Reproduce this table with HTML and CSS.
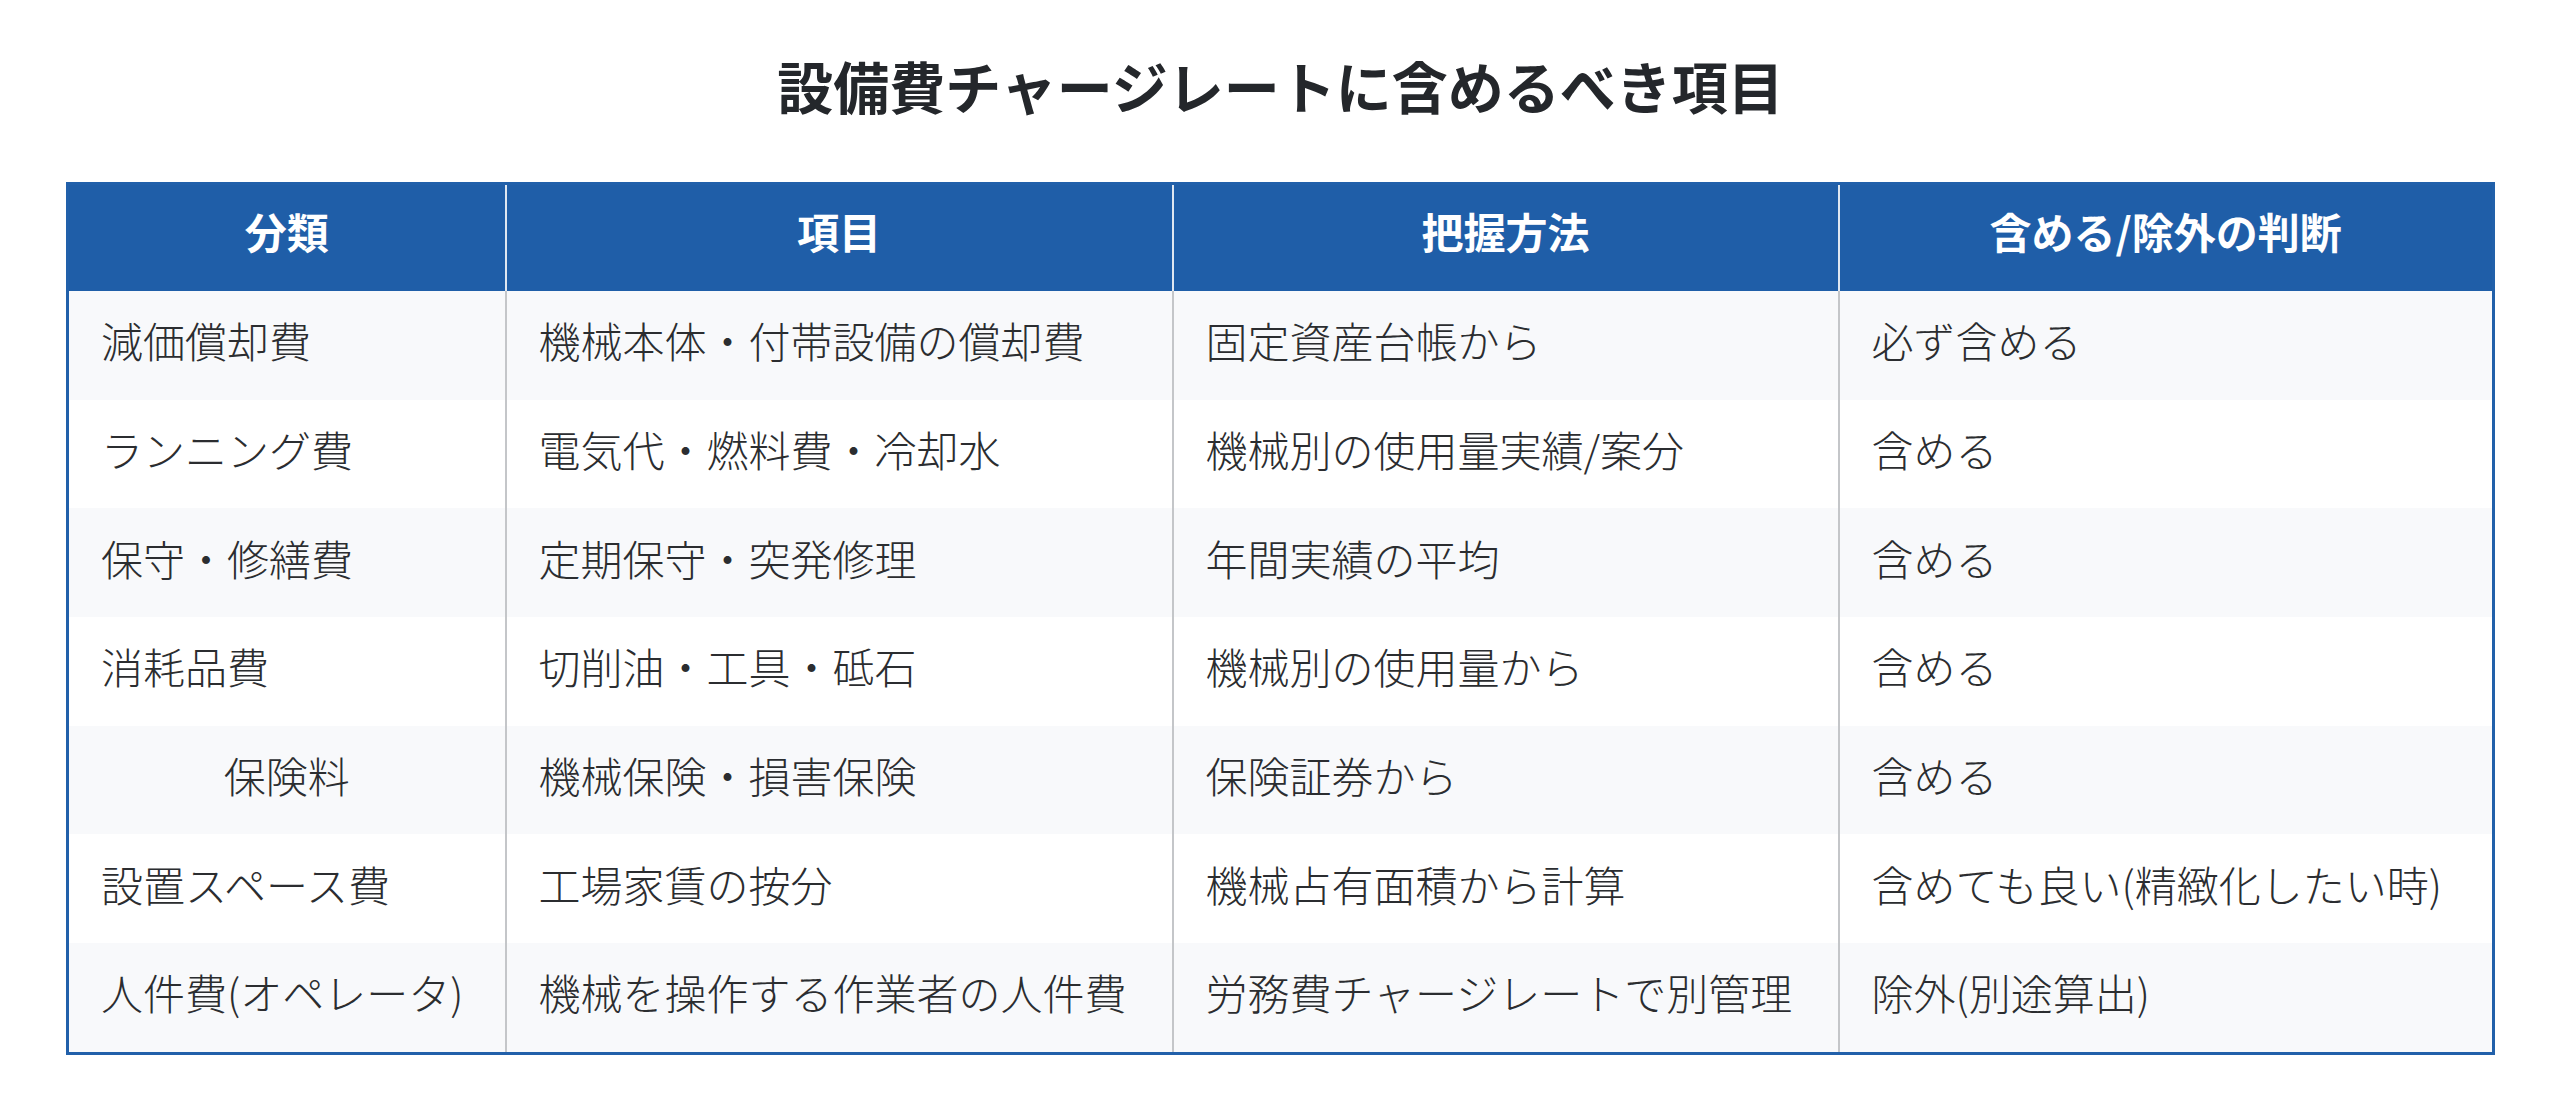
FILE: index.html
```html
<!DOCTYPE html>
<html lang="ja">
<head>
<meta charset="utf-8">
<title>設備費チャージレートに含めるべき項目</title>
<link rel="stylesheet" href="styles.css">
</head>
<body>
<main class="page">
  <h1 class="title">設備費チャージレートに含めるべき項目</h1>
  <table class="items">
    <colgroup>
      <col class="c1"><col class="c2"><col class="c3"><col class="c4">
    </colgroup>
    <thead>
      <tr><th>分類</th><th>項目</th><th>把握方法</th><th>含める/除外の判断</th></tr>
    </thead>
    <tbody>
      <tr><td>減価償却費</td><td>機械本体・付帯設備の償却費</td><td>固定資産台帳から</td><td>必ず含める</td></tr>
      <tr><td>ランニング費</td><td>電気代・燃料費・冷却水</td><td>機械別の使用量実績/案分</td><td>含める</td></tr>
      <tr><td>保守・修繕費</td><td>定期保守・突発修理</td><td>年間実績の平均</td><td>含める</td></tr>
      <tr><td>消耗品費</td><td>切削油・工具・砥石</td><td>機械別の使用量から</td><td>含める</td></tr>
      <tr><td class="center">保険料</td><td>機械保険・損害保険</td><td>保険証券から</td><td>含める</td></tr>
      <tr><td>設置スペース費</td><td>工場家賃の按分</td><td>機械占有面積から計算</td><td>含めても良い(精緻化したい時)</td></tr>
      <tr><td>人件費(オペレータ)</td><td>機械を操作する作業者の人件費</td><td>労務費チャージレートで別管理</td><td>除外(別途算出)</td></tr>
    </tbody>
  </table>
</main>
</body>
</html>
```

FILE: styles.css
```css
html, body {
  margin: 0;
  padding: 0;
  background: #ffffff;
}

body {
  font-family: "Noto Sans CJK JP", "Noto Sans", sans-serif;
  color: #2b2d30;
}

.page {
  padding: 45px 65px 0 66px;
}

.title {
  margin: 0 0 57px;
  font-size: 56px;
  line-height: 80px;
  font-weight: 700;
  text-align: center;
  color: #24272b;
}

.items {
  width: 100%;
  border-collapse: collapse;
  border: 3px solid #2160aa;
  table-layout: fixed;
  font-size: 42px;
}

.c1 { width: 438px; }
.c2 { width: 667px; }
.c3 { width: 666px; }

.items th {
  background: #1f5ea8;
  color: #ffffff;
  font-weight: 700;
  text-align: center;
  height: 92px;
  padding: 0 32px 14px;
  line-height: 46px;
  border-right: 2px solid #dfe7f1;
  border-top: 1px solid #5f8cc4;
}

.items th:last-child {
  border-right: none;
}

.items td {
  height: 98.7px;
  padding: 0 20px 10px 32px;
  line-height: 46px;
  font-weight: 300;
  text-align: left;
  white-space: nowrap;
  border-right: 2px solid #c4c6c9;
  color: #2b2d30;
}

.items td:last-child {
  border-right: none;
}

.items tbody tr:nth-child(odd) td {
  background: #f8f9fb;
}

.items tbody tr:nth-child(even) td {
  background: #ffffff;
}

.items td.center {
  text-align: center;
  padding-left: 20px;
  padding-right: 20px;
}
```
